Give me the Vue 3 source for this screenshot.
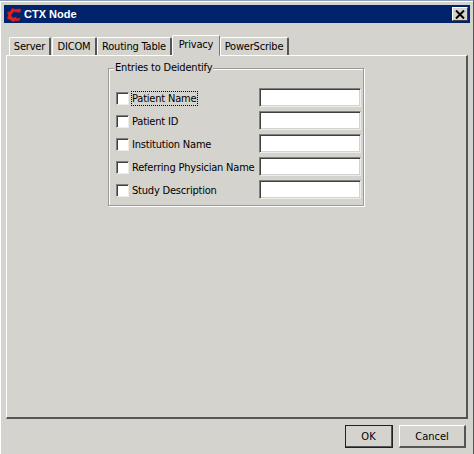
<script setup>
const tabs = [
  { name: 'Server', cls: 'w-server' },
  { name: 'DICOM', cls: 'w-dicom' },
  { name: 'Routing Table', cls: 'w-routing' },
  { name: 'Privacy', cls: 'w-privacy', active: true },
  { name: 'PowerScribe', cls: 'w-power' },
]
const rows = ['Patient Name', 'Patient ID', 'Institution Name', 'Referring Physician Name', 'Study Description']
</script>

<template>
  <div class="window">
    <div class="titlebar">
      <svg class="logo" width="14" height="14" viewBox="0 0 14 14">
        <path d="M5 0.5 L8 1.5 L13.5 1 L13 4.5 L10.5 4 L7 3.5 L3.8 7 L5.5 10 L9 9.5 L10 11 L13 10 L12 12.5 L8.5 12.5 L6 13.5 L3 11.5 L0.5 10.5 L1.5 7 L0.5 4.5 L3.5 3.5 Z" fill="#e0201c" stroke="#e0201c" stroke-width="0.6" />
      </svg>
      <span class="title">CTX Node</span>
      <button class="close" type="button">
        <svg width="10" height="9" viewBox="0 0 10 9"><path d="M1 0.5 L9 8.5 M9 0.5 L1 8.5" stroke="#000" stroke-width="2" fill="none" /></svg>
      </button>
    </div>
    <div class="body">
      <div class="tabs">
        <div v-for="t in tabs" :key="t.name" class="tab" :class="[t.cls, { active: t.active }]">{{ t.name }}</div>
      </div>
      <div class="panel">
        <div class="group">
          <div class="legend">Entries to Deidentify</div>
          <div class="row" v-for="(r, i) in rows" :key="r">
            <span class="check"></span>
            <span class="label" :class="{ focus: i === 0 }">{{ r }}</span>
            <span class="input"></span>
          </div>
        </div>
      </div>
      <div class="footer">
        <button class="btn ok" type="button">OK</button>
        <button class="btn cancel" type="button">Cancel</button>
      </div>
    </div>
  </div>
</template>

<style scoped>
.window {
  width: 474px;
  height: 454px;
  box-sizing: border-box;
  background: #d5d3cd;
  padding: 4px 3px 0 4px;
  border-top: 1px solid #8fa3c0;
  border-right: 1px solid #555;
  font: 11px "DejaVu Sans Condensed", "Liberation Sans", Arial, sans-serif;
  letter-spacing: -0.2px;
  color: #000;
  display: flex;
  flex-direction: column;
  box-shadow: inset 1px 1px 0 #fff;
}
.titlebar {
  height: 18px;
  flex: none;
  background: #00236b;
  display: flex;
  align-items: center;
  color: #fff;
  padding-left: 3px;
}
.logo { flex: none; margin-top: 1px; }
.title { font-weight: 700; font-size: 11px; margin-left: 3px; letter-spacing: 0; font-family: "Liberation Sans", Arial, sans-serif; }
.close {
  margin-left: auto;
  margin-right: 2px;
  width: 16px;
  height: 14px;
  padding: 0;
  background: #d5d3cd;
  border: 1px solid;
  border-color: #fff #404040 #404040 #fff;
  display: flex;
  align-items: center;
  justify-content: center;
}
.body { flex: 1; padding: 12px 0 0 2px; display: flex; flex-direction: column; }
.tabs { display: flex; align-items: flex-end; height: 20px; padding-left: 3px; flex: none; position: relative; z-index: 1; }
.tab {
  height: 18px;
  box-sizing: border-box;
  border-top: 1px solid #fff;
  border-left: 1px solid #fff;
  border-right: 2px solid #555;
  border-top-left-radius: 2px;
  border-top-right-radius: 2px;
  text-align: center;
  line-height: 17px;
}
.w-server { width: 42px; margin-right: 1px; }
.w-dicom { width: 45px; }
.w-routing { width: 75px; }
.w-privacy { width: 48px; }
.w-power { width: 69px; }
.tab.active {
  height: 21px;
  line-height: 17px;
  border-bottom: 1px solid #d5d3cd;
  margin-bottom: -1px;
  border-right-width: 1px;
  border-right-color: #777;
}
.panel {
  height: 364px;
  width: 462px;
  flex: none;
  box-sizing: border-box;
  border: 1px solid;
  border-width: 1px 2px 2px 1px;
  border-color: #fff #555 #555 #fff;
  padding: 12px 0 0 101px;
}
.group {
  width: 256px;
  height: 138px;
  box-sizing: border-box;
  border: 1px solid #9a9a96;
  box-shadow: 1px 1px 0 #fff, inset 1px 1px 0 #fff;
  position: relative;
  padding: 18px 0 0 7px;
}
.legend {
  position: absolute;
  left: 5px;
  top: -8px;
  background: #d5d3cd;
  padding: 0 1px;
  line-height: 13px;
}
.row { display: flex; align-items: center; height: 23px; position: relative; }
.check {
  width: 13px;
  height: 13px;
  flex: none;
  box-sizing: border-box;
  background: #fff;
  border: 1px solid;
  border-color: #808080 #eeece6 #eeece6 #808080;
  box-shadow: inset 1px 1px 0 #404040;
}
.label { margin-left: 3px; white-space: nowrap; line-height: 13px; padding-right: 1px; }
.label.focus { outline: 1px dotted #000; outline-offset: 0; }
.input {
  position: absolute;
  left: 143px;
  top: 1px;
  width: 102px;
  height: 19px;
  box-sizing: border-box;
  background: #fff;
  border: 1px solid;
  border-color: #808080 #eeece6 #eeece6 #808080;
  box-shadow: inset 1px 1px 0 #404040, inset -1px -1px 0 #d5d3cd;
}
.footer { flex: 1; display: flex; justify-content: flex-end; padding: 6px 4px 0 0; gap: 6px; align-items: flex-start; }
.btn {
  height: 23px;
  padding: 0;
  background: #d5d3cd;
  font: inherit;
  color: #000;
  border: 1px solid;
  border-width: 1px 2px 2px 1px;
  border-color: #fff #555 #555 #fff;
}
.btn.ok { width: 48px; outline: 1px solid #222; outline-offset: -1px; }
.btn.cancel { width: 67px; }
</style>

<style>
html, body { margin: 0; padding: 0; background: #d5d3cd; }
</style>
